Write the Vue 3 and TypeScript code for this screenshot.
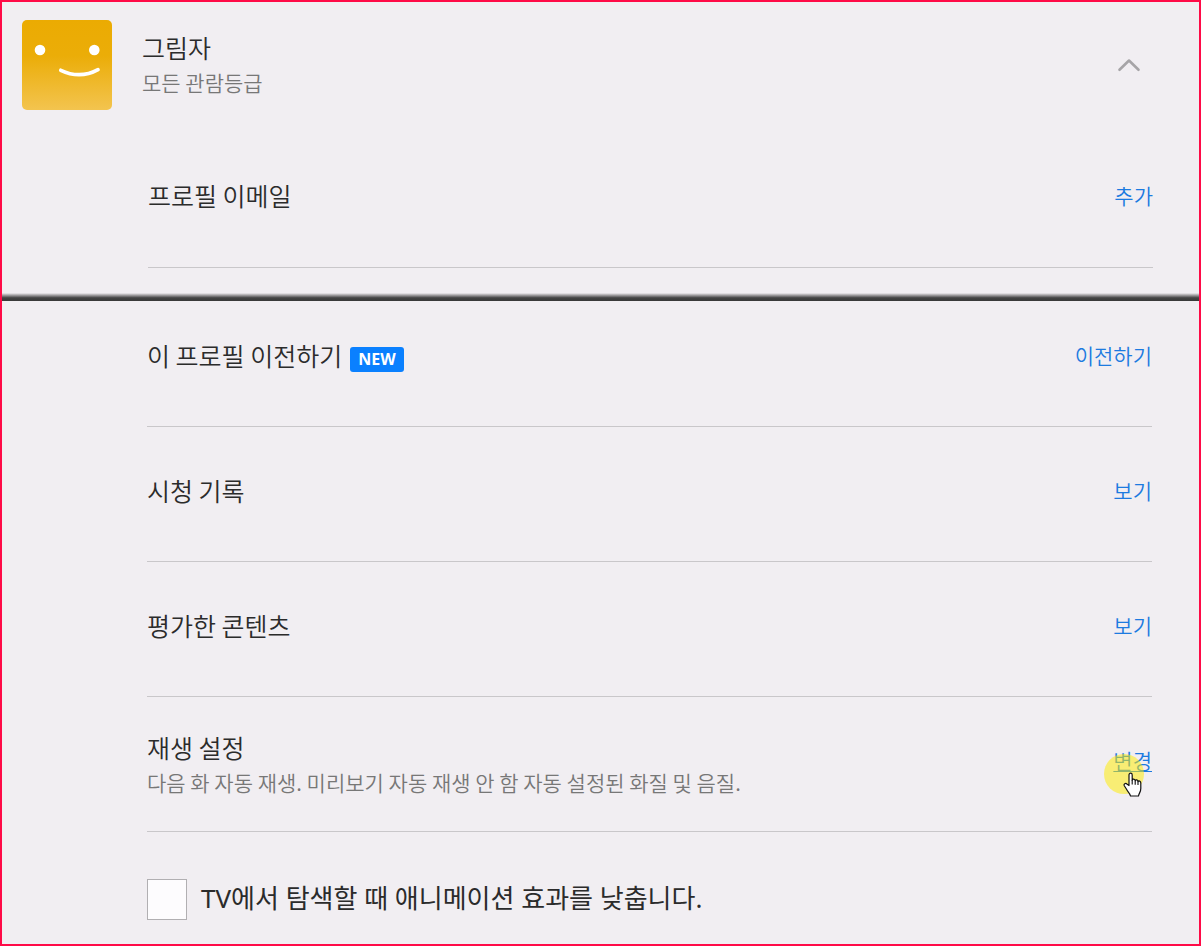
<script setup lang="ts">
import { ref } from 'vue'

interface Setting {
  title: string
  action: string
  badge?: string
  detail?: string
  hovered?: boolean
}

const settings: Setting[] = [
  { title: '이 프로필 이전하기', action: '이전하기', badge: 'NEW' },
  { title: '시청 기록', action: '보기' },
  { title: '평가한 콘텐츠', action: '보기' },
  {
    title: '재생 설정',
    action: '변경',
    detail: '다음 화 자동 재생. 미리보기 자동 재생 안 함 자동 설정된 화질 및 음질.',
    hovered: true,
  },
]

const reduceMotion = ref(false)
</script>

<template>
  <main class="page">
    <section class="profile">
      <header class="head">
        <svg class="avatar" viewBox="0 0 90 90" role="img" aria-label="프로필 아이콘">
          <defs>
            <linearGradient id="gold" x1="0" y1="0" x2="0" y2="1">
              <stop offset="0" stop-color="#ebab02" />
              <stop offset="0.4" stop-color="#ebad08" />
              <stop offset="1" stop-color="#f3c44f" />
            </linearGradient>
          </defs>
          <rect width="90" height="90" rx="5" fill="url(#gold)" />
          <circle cx="18" cy="30" r="5.3" fill="#fff" />
          <circle cx="72.3" cy="30" r="5.3" fill="#fff" />
          <path d="M38.8 50.3Q58 59.5 76 49.6" fill="none" stroke="#fff" stroke-width="3.7" stroke-linecap="round" />
        </svg>
        <div class="who">
          <h1 class="title">그림자</h1>
          <p class="detail">모든 관람등급</p>
        </div>
        <button class="toggle" type="button" aria-label="접기" aria-expanded="true">
          <svg viewBox="0 0 24 14" width="24" height="14">
            <path d="M2.5 11.8L12 2.5L21.5 11.8" fill="none" stroke="#a6a4a7" stroke-width="2.6" stroke-linecap="round" stroke-linejoin="round" />
          </svg>
        </button>
      </header>
      <div class="row email">
        <h2 class="title">프로필 이메일</h2>
        <a class="action" href="#">추가</a>
      </div>
      <div class="tear"></div>
    </section>

    <section class="settings">
      <div v-for="item in settings" :key="item.title" class="row" :class="{ double: item.detail }">
        <div>
          <h2 class="title">{{ item.title }}<span v-if="item.badge" class="badge">{{ item.badge }}</span></h2>
          <p v-if="item.detail" class="detail">{{ item.detail }}</p>
        </div>
        <a class="action" :class="{ hovered: item.hovered }" href="#">{{ item.action }}<span v-if="item.hovered" class="halo"></span><svg v-if="item.hovered" class="hand" viewBox="0 0 19 25" aria-hidden="true">
          <path d="M6 13.5V3C6 .5 9.2.5 9.2 3V8.2C9.5 6.5 12 6.7 12.2 8.7C12.7 7.4 14.9 7.7 15 9.6C15.7 8.5 17.8 8.9 17.8 11V16.5C17.8 20 16 21 15.5 24H7.5C7 21 4.5 19.5 3.7 17.5L1.3 13.7C.4 12 2.6 10.7 3.9 12Z" fill="#fff" stroke="#111" stroke-width="1.2" stroke-linejoin="round" />
          <path d="M9.2 8V12.5M12.2 8.7V12.7M15 9.6V13" fill="none" stroke="#111" stroke-width="1.1" />
        </svg></a>
      </div>
      <label class="motion">
        <input v-model="reduceMotion" type="checkbox" />
        <span>TV에서 탐색할 때 애니메이션 효과를 낮춥니다.</span>
      </label>
    </section>
  </main>
</template>

<style>
body {
  margin: 0;
}
</style>

<style scoped>
.page {
  box-sizing: border-box;
  min-height: 100vh;
  border: 2px solid #ff0a47;
  background: #f1eef2;
  color: #2b2b2b;
  font-family: "Noto Sans CJK KR", "Noto Sans", sans-serif;
  font-weight: 350;
}

.title,
.detail {
  margin: 0;
  font-weight: 350;
}

.title {
  font-size: 25px;
  line-height: 36px;
}

.detail {
  color: #777;
  font-size: 21px;
  line-height: 34px;
}

.profile {
  display: flex;
  flex-direction: column;
}

.head {
  display: flex;
  align-items: center;
  padding: 18px 58px 0 20px;
}

.avatar {
  width: 90px;
  height: 90px;
  margin-right: 30px;
}

.who {
  flex: 1;
  padding-bottom: 2px;
}

.toggle {
  display: flex;
  padding: 0;
  border: 0;
  background: none;
}

.row {
  display: flex;
  align-items: flex-start;
  justify-content: space-between;
  padding: 45px 0 53px;
  border-bottom: 1px solid #c9c7ca;
}

.email {
  margin: 22px 46px 0 146px;
  padding-bottom: 54px;
}

.tear {
  height: 8px;
  margin-top: 25px;
  background: linear-gradient(#f1eef2, #8b898b 35%, #444 60%, #383838);
}

.settings {
  padding: 0 47px 0 145px;
}

.settings .row:first-child {
  padding-top: 36px;
}

.row.double {
  padding: 32px 0;
}

.double .action {
  margin-top: 13px;
}

.action {
  position: relative;
  color: #1c7ae0;
  font-size: 21px;
  line-height: 36px;
  text-decoration: none;
}

.action.hovered {
  text-decoration: underline;
  text-decoration-thickness: 1px;
  text-underline-offset: 2px;
}

.badge {
  display: inline-block;
  margin-left: 8px;
  padding: 0 8px;
  border-radius: 3px;
  background: #0a80ff;
  color: #fff;
  font-family: "Open Sans", "Noto Sans", sans-serif;
  font-size: 16px;
  font-weight: 700;
  line-height: 25px;
  vertical-align: 1px;
}

.halo {
  position: absolute;
  top: 12px;
  left: -9px;
  width: 40px;
  height: 40px;
  border-radius: 50%;
  background: rgba(255, 236, 0, 0.52);
}

.hand {
  position: absolute;
  top: 30px;
  left: 10px;
  width: 19px;
  height: 25px;
}

.motion {
  display: flex;
  align-items: center;
  gap: 14px;
  padding: 47px 0 24px;
  font-family: "Noto Sans", "Noto Sans CJK KR", sans-serif;
  font-size: 26px;
  font-weight: 400;
  line-height: 36px;
}

.motion span {
  padding-bottom: 3px;
}

.motion input {
  appearance: none;
  width: 40px;
  height: 41px;
  margin: 0;
  border: 1px solid #b1afb2;
  background: #fdfcfe;
}
</style>
